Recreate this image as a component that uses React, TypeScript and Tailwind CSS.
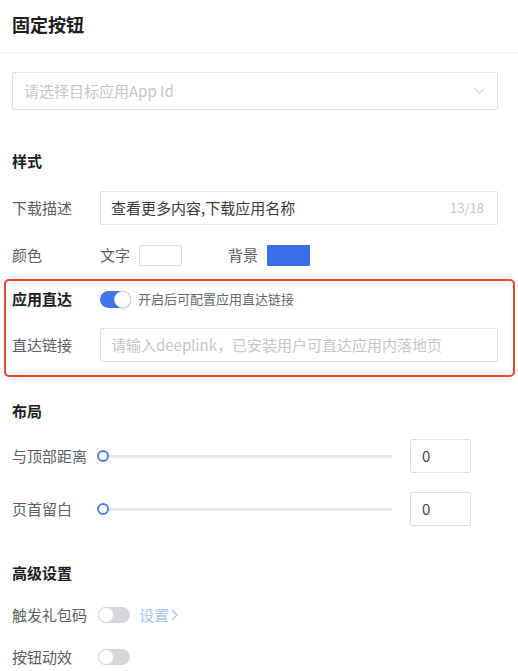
import React from "react";

const font = { fontFamily: '"Noto Sans CJK SC", "Noto Sans", sans-serif' };

function Toggle({ on }: { on?: boolean }) {
  if (on) {
    return (
      <div className="relative w-[31px] h-[17px] rounded-full bg-[#3f74ea] shrink-0">
        <div className="absolute right-0 top-0 w-[17px] h-[17px] rounded-full bg-white border border-[#e2e4ea] shadow-[0_1px_2px_rgba(0,0,0,0.15)]" />
      </div>
    );
  }
  return (
    <div className="relative w-[32px] h-[16px] rounded-full bg-[#d6d7db] shrink-0">
      <div className="absolute left-0 top-0 w-[16px] h-[16px] rounded-full bg-white border border-[#d6d7db]" />
    </div>
  );
}

function SliderRow({ label }: { label: string }) {
  return (
    <div className="flex items-center h-[34px] mr-[27px]">
      <div className="w-[85px] text-[15px] text-[#5b5e66]">{label}</div>
      <div className="flex-1 flex items-center">
        <div className="w-[12px] h-[12px] rounded-full border-2 border-[#4d7ef0] bg-white shrink-0" />
        <div className="flex-1 h-[3px] bg-[#e6e8ee]" />
      </div>
      <div className="ml-[18px] w-[61px] h-[34px] border border-[#dcdfe6] rounded-[2px] flex items-center pl-[11px] text-[15px] text-[#444]">
        0
      </div>
    </div>
  );
}

export default function App() {
  return (
    <div className="w-[518px] h-[671px] bg-white overflow-hidden" style={font}>
      <div className="h-[53px] border-b border-[#eceef3] pl-3 pt-[11px]">
        <h1 className="text-[18px] leading-[26px] font-bold text-[#1d1d1f]">固定按钮</h1>
      </div>

      <div className="pl-3 pr-5">
        <div className="mt-[19px] h-[38px] border border-[#dcdfe6] rounded-[2px] flex items-center justify-between pl-[11px] pr-[12px]">
          <span className="text-[15px] text-[#c3c6cd]">请选择目标应用App Id</span>
          <svg width="11" height="6" viewBox="0 0 11 6" fill="none">
            <path d="M0.5 0.5L5.5 5L10.5 0.5" stroke="#c0c4cc" strokeWidth="1" />
          </svg>
        </div>

        <h2 className="mt-[41px] text-[15px] leading-5 font-bold text-[#1d1d1f]">样式</h2>

        <div className="mt-5 flex items-center">
          <div className="w-[88px] text-[15px] text-[#5b5e66]">下载描述</div>
          <div className="flex-1 h-[34px] border border-[#dcdfe6] rounded-[2px] flex items-center justify-between pl-[10px] pr-[13px]">
            <span className="text-[15px] text-[#3a3a3a]">查看更多内容,下载应用名称</span>
            <span className="text-[13px] text-[#c3c6cd]">13/18</span>
          </div>
        </div>

        <div className="mt-5 flex items-center h-[21px]">
          <div className="w-[88px] text-[15px] text-[#5b5e66]">颜色</div>
          <span className="text-[15px] text-[#5b5e66]">文字</span>
          <div className="ml-[9px] w-[43px] h-[21px] border border-[#dcdfe6] bg-white rounded-[2px]" />
          <span className="ml-[46px] text-[15px] text-[#5b5e66]">背景</span>
          <div className="ml-[9px] w-[43px] h-[21px] bg-[#3b6ee8] rounded-[1px]" />
        </div>

        <div className="mt-[13px] -ml-2 -mr-[17px] border-2 border-[#e8452f] rounded-[5px] pl-[6px] pr-[15px] pt-[8px] pb-[13px]">
          <div className="flex items-center h-5">
            <div className="w-[88px] text-[15px] font-bold text-[#1d1d1f]">应用直达</div>
            <Toggle on />
            <span className="ml-[7px] text-[13px] text-[#66696f]">开启后可配置应用直达链接</span>
          </div>
          <div className="mt-[19px] flex items-center">
            <div className="w-[88px] text-[15px] text-[#5b5e66]">直达链接</div>
            <div className="flex-1 h-[34px] border border-[#dcdfe6] rounded-[2px] flex items-center pl-[10px]">
              <span className="text-[15px] text-[#c3c6cd]">请输入deeplink，已安装用户可直达应用内落地页</span>
            </div>
          </div>
        </div>

        <h2 className="mt-6 text-[15px] leading-5 font-bold text-[#1d1d1f]">布局</h2>

        <div className="mt-[18px]">
          <SliderRow label="与顶部距离" />
        </div>
        <div className="mt-[19px]">
          <SliderRow label="页首留白" />
        </div>

        <h2 className="mt-[37px] text-[15px] leading-5 font-bold text-[#1d1d1f]">高级设置</h2>

        <div className="mt-[22px] flex items-center h-5">
          <div className="w-[86px] text-[15px] text-[#5b5e66]">触发礼包码</div>
          <Toggle />
          <span className="ml-[9px] text-[15px] text-[#a9c1f6] flex items-center gap-[2px]">
            设置
            <svg width="7" height="12" viewBox="0 0 7 12" fill="none">
              <path d="M1 1L6 6L1 11" stroke="#a9c1f6" strokeWidth="1.3" />
            </svg>
          </span>
        </div>

        <div className="mt-[22px] flex items-center h-5">
          <div className="w-[86px] text-[15px] text-[#5b5e66]">按钮动效</div>
          <Toggle />
        </div>
      </div>
    </div>
  );
}
